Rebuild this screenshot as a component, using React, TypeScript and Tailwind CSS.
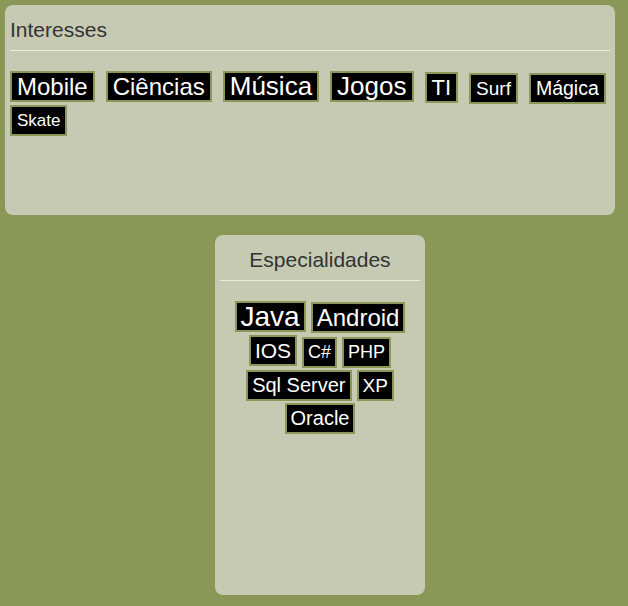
type Tag = { label: string; size: string }

const interesses: Tag[] = [
  { label: 'Mobile', size: 'text-[24px]' },
  { label: 'Ciências', size: 'text-[24px]' },
  { label: 'Música', size: 'text-[26px]' },
  { label: 'Jogos', size: 'text-[26px]' },
  { label: 'TI', size: 'text-[22px]' },
  { label: 'Surf', size: 'text-[19px]' },
  { label: 'Mágica', size: 'text-[19.5px]' },
  { label: 'Skate', size: 'text-[17px]' },
]

const especialidades: Tag[] = [
  { label: 'Java', size: 'text-[28px]' },
  { label: 'Android', size: 'text-[24px]' },
  { label: 'IOS', size: 'text-[21px]' },
  { label: 'C#', size: 'text-[18px]' },
  { label: 'PHP', size: 'text-[18px]' },
  { label: 'Sql Server', size: 'text-[20px]' },
  { label: 'XP', size: 'text-[19px]' },
  { label: 'Oracle', size: 'text-[20px]' },
]

function TagItem({ tag, pad }: { tag: Tag; pad: string }) {
  return (
    <span
      className={`${tag.size} ${pad} leading-[27px] whitespace-nowrap bg-black text-white border-2 border-[#8a9757]`}
    >
      {tag.label}
    </span>
  )
}

export default function App() {
  return (
    <div className="min-h-screen bg-[#8a9757] p-[5px] font-['Liberation_Sans',Arial,sans-serif]">
      <section className="w-[610px] h-[210px] rounded-[8px] bg-[#c6cab3] px-[5px] pt-[13px]">
        <h2 className="text-[21px] leading-[24px] pb-[8px] text-[#333] border-b border-[#e9eae0]">
          Interesses
        </h2>
        <div className="mt-[20px] flex flex-wrap items-baseline gap-x-[11px] gap-y-[1px]">
          {interesses.map((t) => (
            <TagItem key={t.label} tag={t} pad="px-[5px]" />
          ))}
        </div>
      </section>

      <section className="mt-[20px] ml-[210px] w-[210px] h-[360px] rounded-[8px] bg-[#c6cab3] px-[5px] pt-[13px]">
        <h2 className="text-[21px] leading-[24px] pb-[8px] text-center text-[#333] border-b border-[#e9eae0]">
          Especialidades
        </h2>
        <div className="mt-[20px] flex flex-wrap justify-center items-baseline gap-x-[5px] gap-y-[2px]">
          {especialidades.map((t) => (
            <TagItem key={t.label} tag={t} pad="px-[4px]" />
          ))}
        </div>
      </section>
    </div>
  )
}
